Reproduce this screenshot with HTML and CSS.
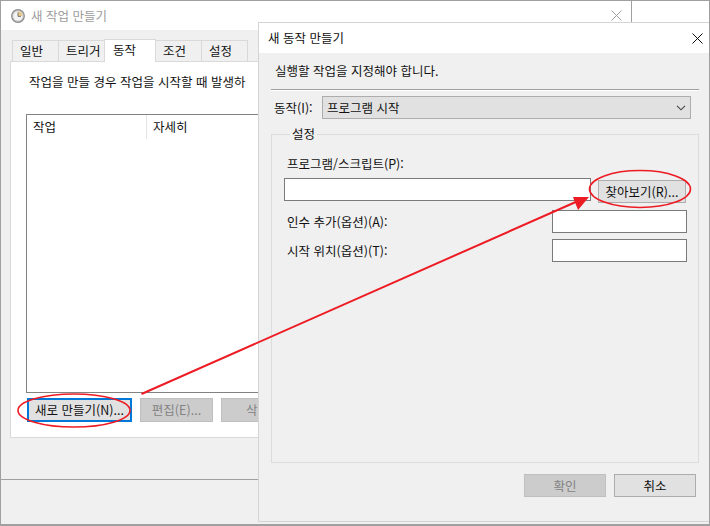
FILE: index.html
```html
<!DOCTYPE html>
<html lang="ko">
<head>
<meta charset="utf-8">
<title>새 작업 만들기</title>
<link rel="stylesheet" href="styles.css">
</head>
<body>
<div class="stage">
  <section class="back">
    <header class="back-title">
      <svg class="clock" width="14" height="14" viewBox="0 0 14 14"><circle cx="7" cy="7" r="6.3" fill="#cfcfcf" stroke="#8c8c8c" stroke-width="1.2"/><circle cx="7" cy="7" r="4.6" fill="#f4f4f4"/><path d="M7 2.4A4.6 4.6 0 0 1 11.6 7H7Z" fill="#e8c98a"/><path d="M7 3.4V7.4H10" fill="none" stroke="#777" stroke-width="1"/></svg>
      <span class="back-title-text">새 작업 만들기</span>
      <svg class="back-close" width="11" height="11" viewBox="0 0 11 11"><path d="M.5.5 10.5 10.5M10.5.5.5 10.5" stroke="#a0a0a0" stroke-width="1"/></svg>
      <div class="back-corner"></div>
    </header>
    <div class="back-body">
      <nav class="tabs">
        <span class="tab">일반</span><span class="tab">트리거</span><span class="tab tab-on">동작</span><span class="tab">조건</span><span class="tab">설정</span>
      </nav>
      <div class="panel">
        <p class="panel-note">작업을 만들 경우 작업을 시작할 때 발생하</p>
        <div class="list">
          <div class="list-head"><span class="col-a">작업</span><span class="col-b">자세히</span></div>
        </div>
        <div class="list-btns">
          <button class="btn btn-focus">새로 만들기(N)...</button>
          <button class="btn btn-off btn-edit">편집(E)...</button>
          <button class="btn btn-off btn-edit">삭제</button>
        </div>
      </div>
      <div class="back-foot"></div>
    </div>
  </section>

  <section class="front">
    <header class="front-title">
      <span>새 동작 만들기</span>
      <svg width="11" height="11" viewBox="0 0 11 11"><path d="M.5.5 10.5 10.5M10.5.5.5 10.5" stroke="#111" stroke-width="1"/></svg>
    </header>
    <div class="front-body">
      <p class="intro">실행할 작업을 지정해야 합니다.</p>
      <div class="rule"></div>
      <div class="action-row">
        <label class="action-label">동작(I):</label>
        <div class="select"><span>프로그램 시작</span>
          <svg width="10" height="6" viewBox="0 0 10 6"><path d="M1 .8 5 4.8 9 .8" fill="none" stroke="#444" stroke-width="1.1"/></svg>
        </div>
      </div>
      <fieldset class="group">
        <legend>설정</legend>
        <div class="field-label">프로그램/스크립트(P):</div>
        <div class="prog-row">
          <div class="input input-prog"></div>
          <button class="btn btn-browse">찾아보기(R)...</button>
        </div>
        <div class="opt-row"><span>인수 추가(옵션)(A):</span><div class="input input-opt"></div></div>
        <div class="opt-row opt-row-2"><span>시작 위치(옵션)(T):</span><div class="input input-opt"></div></div>
      </fieldset>
      <div class="front-foot">
        <button class="btn btn-off btn-dlg">확인</button>
        <button class="btn btn-dlg">취소</button>
      </div>
    </div>
  </section>

  <svg class="marks" width="710" height="526" viewBox="0 0 710 526">
    <ellipse cx="74" cy="410.5" rx="56" ry="16.5" fill="none" stroke="#ed1c24" stroke-width="1.6"/>
    <ellipse cx="640" cy="189" rx="50.5" ry="18.5" fill="none" stroke="#ed1c24" stroke-width="1.6"/>
    <path d="M141.500 394 578 201" fill="none" stroke="#ed1c24" stroke-width="2"/>
    <path d="M573 197 589 197 578 210Z" fill="#ed1c24"/>
  </svg>
</div>
</body>
</html>
```

FILE: styles.css
```css
* { box-sizing: border-box; }
html, body { margin: 0; padding: 0; background: #fff; }
body { font: 12.5px/16px "Noto Sans CJK KR", "Noto Sans", sans-serif; color: #111; }
p { margin: 0; }

.stage {
  position: relative;
  width: 710px;
  height: 526px;
  overflow: hidden;
  border: 1px solid #a0a0a0;
  border-bottom-width: 2px;
}

/* back window */
.back { display: flex; flex-direction: column; height: 100%; }
.back-title {
  display: flex;
  align-items: center;
  height: 29px;
  padding-left: 10px;
  background: #fff;
  flex: none;
}
.clock { flex: none; }
.back-title-text { margin-left: 6px; color: #9c9c9c; }
.back-close { margin-left: auto; margin-right: 9px; }
.back-corner { width: 78px; height: 100%; border-left: 1px solid #a0a0a0; }

.back-body { flex: 1; display: flex; flex-direction: column; background: #f0f0f0; min-height: 0; }
.tabs { display: flex; align-items: flex-end; height: 31px; padding-left: 11px; flex: none; }
.tab {
  width: 47px;
  height: 21px;
  padding-left: 7px;
  line-height: 20px;
  background: #f0f0f0;
  border: 1px solid #d9d9d9;
  border-bottom: 0;
  margin-right: -1px;
}
.tab-on {
  position: relative;
  width: 52px;
  height: 23px;
  margin: 0 -1px -1px 0;
  padding-left: 8px;
  line-height: 20px;
  background: #fff;
  z-index: 1;
}
.panel {
  width: 640px;
  height: 377px;
  margin-left: 9px;
  padding: 12px 15px 0;
  background: #fff;
  border: 1px solid #d9d9d9;
  flex: none;
}
.panel-note { padding-left: 3px; white-space: nowrap; }
.list {
  height: 279px;
  margin-top: 24px;
  width: 500px;
  border: 1px solid #828282;
}
.list-head { display: flex; height: 24px; line-height: 23px; }
.col-a { width: 120px; padding-left: 6px; border-right: 1px solid #e5e5e5; }
.col-b { padding-left: 6px; }
.list-btns { display: flex; gap: 8px; margin-top: 5px; padding-left: 1px; }

.btn {
  display: block;
  height: 24px;
  padding: 0;
  font: inherit;
  color: #111;
  background: #e1e1e1;
  border: 1px solid #adadad;
}
.btn-focus { width: 105px; border: 2px solid #0078d7; }
.btn-off { background: #ccc; border-color: #bfbfbf; color: #838383; }
.btn-edit { width: 73px; }

.back-foot { margin-top: 41px; flex: 1; border-top: 1px solid #a0a0a0; }

/* front window */
.front {
  position: absolute;
  left: 257px;
  top: 21px;
  width: 452px;
  height: 500px;
  display: flex;
  flex-direction: column;
  background: #f0f0f0;
  border: 1px solid #d4d4d4;
  border-right: 0;
}
.front-title {
  display: flex;
  align-items: center;
  justify-content: space-between;
  height: 30px;
  padding: 0 7px 0 9px;
  background: #fff;
  flex: none;
}
.front-body { flex: 1; padding: 10px 11px 0 12px; display: flex; flex-direction: column; }
.intro { padding-left: 4px; }
.rule { margin-top: 10px; border-top: 1px solid #a0a0a0; border-bottom: 1px solid #fff; height: 2px; margin-right: 0; }
.action-row { display: flex; align-items: center; margin-top: 5px; padding-left: 3px; }
.action-label { width: 48px; }
.select {
  display: flex;
  align-items: center;
  justify-content: space-between;
  width: 369px;
  height: 23px;
  padding: 0 4px 0 4px;
  background: #e1e1e1;
  border: 1px solid #adadad;
}
.group {
  position: relative;
  flex: none;
  height: 337px;
  margin: 7px 0 0 0;
  padding: 14px 11px 0 12px;
  border: 1px solid #dcdcdc;
  min-width: 0;
}
.group legend { padding: 0 2px; margin-left: 6px; line-height: 16px; }
.field-label { padding-left: 3px; }
.prog-row { display: flex; align-items: flex-start; gap: 7px; margin-top: 6px; }
.input { background: #fff; border: 1px solid #7a7a7a; height: 23px; }
.input-prog { width: 307px; }
.btn-browse { width: 88px; height: 23px; margin-top: 2px; }
.opt-row { display: flex; justify-content: space-between; align-items: center; margin-top: 7px; padding-left: 3px; width: 403px; }
.opt-row-2 { margin-top: 6px; }
.input-opt { width: 135px; }
.front-foot { display: flex; justify-content: flex-end; gap: 8px; margin-top: 11px; padding-right: 3px; }
.btn-dlg { width: 82px; height: 23px; }

/* annotations */
.marks { position: absolute; left: -1px; top: -1px; pointer-events: none; }
```
